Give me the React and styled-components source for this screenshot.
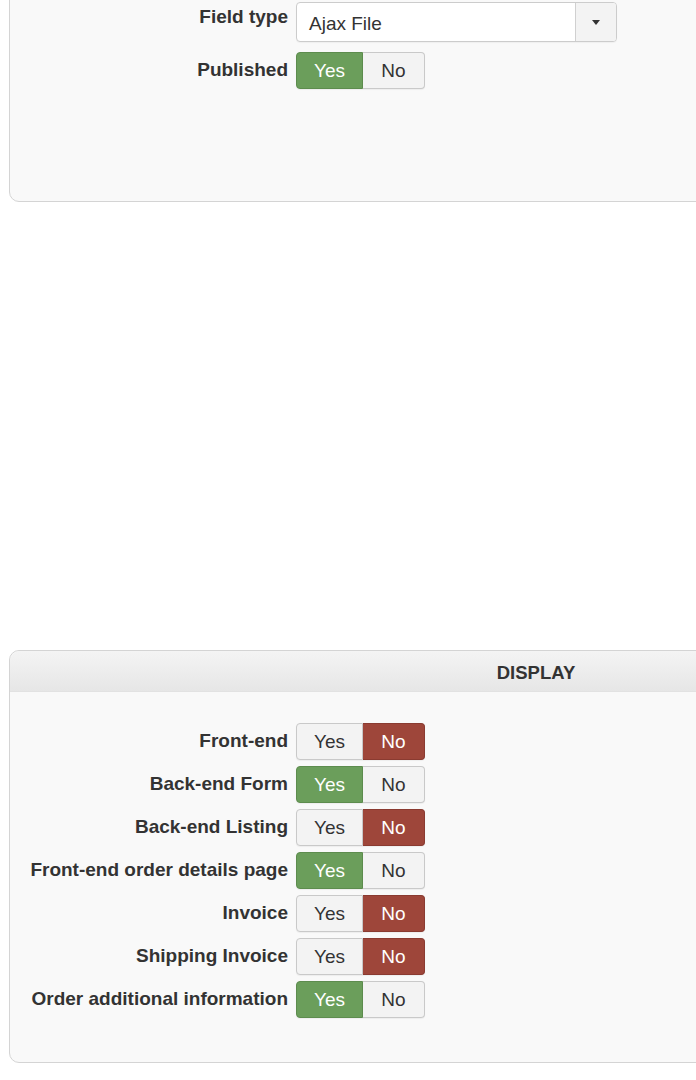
import styled, { createGlobalStyle } from 'styled-components'

const GlobalStyle = createGlobalStyle`
    html, body {
        margin: 0;
        padding: 0;
        background: #ffffff;
        overflow-x: hidden;
    }
    body {
        font-family: "Liberation Sans", Helvetica, Arial, sans-serif;
        color: #333333;
    }
`

const Page = styled.div`
    padding-left: 9px;
    width: 1100px;
`

const Panel = styled.section`
    box-sizing: border-box;
    width: 1054px;
    background: #f9f9f9;
    border: 1px solid #d4d4d4;
    border-radius: 10px;
    margin-top: ${props => props.$top}px;
    padding-bottom: ${props => props.$bottom}px;
`

const PanelHeader = styled.header`
    height: 41px;
    display: flex;
    align-items: center;
    justify-content: center;
    padding-top: 3px;
    border-radius: 10px 10px 0 0;
    background: linear-gradient(#f4f4f4, #e6e6e6);
    border-bottom: 1px solid #e2e2e2;
    box-sizing: border-box;
    font-size: 18.5px;
    font-weight: bold;
    color: #333;
`

const PanelBody = styled.div`
    padding-top: ${props => props.$top}px;
    display: flex;
    flex-direction: column;
    gap: ${props => props.$gap}px;
`

const Row = styled.div`
    display: flex;
    align-items: flex-start;
    gap: 8px;
`

const Label = styled.label`
    width: 278px;
    flex: none;
    text-align: right;
    font-size: 19px;
    font-weight: bold;
    line-height: 23px;
    padding-top: ${props => props.$pad}px;
    color: #333;
    white-space: nowrap;
`

const SelectBox = styled.div`
    box-sizing: border-box;
    width: 321px;
    height: 40px;
    display: flex;
    background: #ffffff;
    border: 1px solid #cccccc;
    border-radius: 4px;
    box-shadow: 0 1px 1px rgba(0, 0, 0, 0.04);
`

const SelectValue = styled.div`
    flex: 1;
    padding: 3px 0 0 12px;
    display: flex;
    align-items: center;
    font-size: 19px;
    color: #333;
`

const SelectArrow = styled.div`
    width: 40px;
    display: flex;
    align-items: center;
    justify-content: center;
    background: #f3f3f3;
    border-left: 1px solid #d0d0d0;
    border-radius: 0 3px 3px 0;
`

const Caret = styled.span`
    width: 0;
    height: 0;
    border-left: 4.5px solid transparent;
    border-right: 4.5px solid transparent;
    border-top: 5px solid #333;
`

const Toggle = styled.div`
    display: flex;
    height: 37px;
`

const ToggleButton = styled.button`
    box-sizing: border-box;
    width: ${props => props.$w}px;
    height: 37px;
    padding: 0;
    margin: 0;
    font-family: inherit;
    font-size: 19px;
    cursor: pointer;
    border: 1px solid ${props =>
        props.$on === 'yes' ? '#5d8c4e' : props.$on === 'no' ? '#8a3b31' : '#c9c9c9'};
    background: ${props =>
        props.$on === 'yes' ? '#6b9e5b' : props.$on === 'no' ? '#9e463a' : '#f3f3f3'};
    color: ${props => (props.$on ? '#ffffff' : '#333333')};
    border-radius: ${props => (props.$first ? '4px 0 0 4px' : '0 4px 4px 0')};
    ${props => (props.$first ? '' : 'border-left: none;')}
    box-shadow: 0 1px 1px rgba(0, 0, 0, 0.05);
`

function YesNo({ value }) {
    return (
        <Toggle>
            <ToggleButton $first $w={67} $on={value ? 'yes' : null}>Yes</ToggleButton>
            <ToggleButton $w={62} $on={value ? null : 'no'}>No</ToggleButton>
        </Toggle>
    )
}

const displayRows = [
    { label: 'Front-end', value: false },
    { label: 'Back-end Form', value: true },
    { label: 'Back-end Listing', value: false },
    { label: 'Front-end order details page', value: true },
    { label: 'Invoice', value: false },
    { label: 'Shipping Invoice', value: false },
    { label: 'Order additional information', value: true },
]

export default function App() {
    return (
        <>
            <GlobalStyle />
            <Page>
                <Panel $top={-30} $bottom={112}>
                    <PanelBody $top={31} $gap={10}>
                        <Row>
                            <Label $pad={3}>Field type</Label>
                            <SelectBox>
                                <SelectValue>Ajax File</SelectValue>
                                <SelectArrow><Caret /></SelectArrow>
                            </SelectBox>
                        </Row>
                        <Row>
                            <Label $pad={6}>Published</Label>
                            <YesNo value={true} />
                        </Row>
                    </PanelBody>
                </Panel>

                <Panel $top={448} $bottom={44}>
                    <PanelHeader>DISPLAY</PanelHeader>
                    <PanelBody $top={31} $gap={6}>
                        {displayRows.map(row => (
                            <Row key={row.label}>
                                <Label $pad={6}>{row.label}</Label>
                                <YesNo value={row.value} />
                            </Row>
                        ))}
                    </PanelBody>
                </Panel>
            </Page>
        </>
    )
}
